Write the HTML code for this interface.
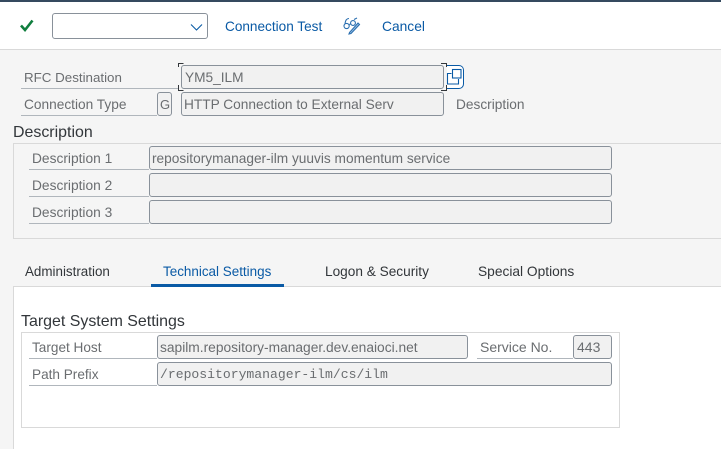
<!DOCTYPE html>
<html><head><meta charset="utf-8"><style>
html,body{margin:0;padding:0}
body{width:721px;height:449px;overflow:hidden;position:relative;background:#f5f5f5;font-family:"Liberation Sans",sans-serif;font-size:13.7px;color:#6a6d70}
div{position:absolute;box-sizing:border-box;white-space:nowrap}
.t{line-height:18px;height:18px}
.l{height:1px;background:#b0b6bc}
.f{background:#f1f1f1;border:1px solid #89919a;border-radius:3px;line-height:23px;padding-left:2px;height:24px;color:#6a6d70;font-size:13.7px}
.b{color:#0a5aa5}
.h{color:#32363a;font-size:15.95px}
.tab{color:#32363a;font-size:13.65px}
</style></head><body>
<div style="left:0;top:0;width:721px;height:2px;background:#354a5f"></div>
<div style="left:0;top:2px;width:721px;height:48px;background:#fff;border-bottom:1px solid #d9d9d9"></div>
<svg style="position:absolute;left:19px;top:18px" width="16" height="15" viewBox="0 0 16 15"><path d="M2 7.500L6 12L13.500 2.500" fill="none" stroke="#107e3e" stroke-width="2.600"/></svg>
<div style="left:52px;top:13px;width:156px;height:26px;background:#fff;border:1px solid #89919a;border-radius:3px"></div>
<svg style="position:absolute;left:190px;top:23px" width="14" height="9" viewBox="0 0 14 9"><path d="M1 1.500L6.500 7L12 1.500" fill="none" stroke="#0a5aa5" stroke-width="1.100"/></svg>
<div class="t b" style="left:225px;top:18px;font-size:13.6px">Connection Test</div>
<svg style="position:absolute;left:343px;top:17px" width="18" height="18" viewBox="0 0 18 18" fill="none" stroke="#2a6fb0" stroke-width="1.100"><circle cx="3.600" cy="9" r="2.600"/><circle cx="10" cy="6" r="2.400"/><path d="M2 6.500C2.500 3 4 1.500 6 1.500M6.200 7.500L7.600 7M11 2.500L14 1"/><path d="M6.500 15.500L6 17L8 16.500L16.500 7.500L15 6Z" fill="#9cc1e2"/></svg>
<div class="t b" style="left:382px;top:18px;font-size:13.8px">Cancel</div>

<div class="t" style="left:24px;top:69px;font-size:13.35px">RFC Destination</div>
<div class="l" style="left:21px;top:88px;width:158px"></div>
<div class="f" style="left:181px;top:65px;width:263px;padding-left:3px">YM5_ILM</div>
<div style="left:447px;top:65px;width:17px;height:24px;background:#fff;border:1px solid #0a5aa5;border-left:0;border-radius:0 5px 5px 0"></div>
<svg style="position:absolute;left:446px;top:66px" width="17" height="22" viewBox="0 0 17 22" fill="none" stroke="#0a5aa5" stroke-width="1.100"><rect x="6.500" y="3.500" width="8.500" height="8.500"/><path d="M5.500 7.500H1.500V18H12.500V13"/></svg>
<svg style="position:absolute;left:176px;top:61px" width="274" height="32" viewBox="0 0 274 32" fill="none" stroke="#32363a" stroke-width="1"><path d="M7.500 2.500H2.500V6M2.500 24V29.500H7.500M265 2.500H270.500V6M270.500 24V29.500H265"/></svg>

<div class="t" style="left:24px;top:96px">Connection Type</div>
<div class="l" style="left:21px;top:115px;width:136px"></div>
<div class="f" style="left:157px;top:92px;width:15px;font-size:13px;padding-left:2px">G</div>
<div class="f" style="left:181px;top:92px;width:263px">HTTP Connection to External Serv</div>
<div class="t" style="left:456px;top:96px">Description</div>

<div class="t h" style="left:13px;top:124px">Description</div>
<div style="left:13px;top:143px;width:708px;height:96px;border:1px solid #d9d9d9;border-right:0"></div>
<div class="t" style="left:32px;top:150px;font-size:13.75px">Description 1</div>
<div class="l" style="left:29px;top:169px;width:120px"></div>
<div class="f" style="left:149px;top:146px;width:463px">repositorymanager-ilm yuuvis momentum service</div>
<div class="t" style="left:32px;top:177px;font-size:13.75px">Description 2</div>
<div class="l" style="left:29px;top:196px;width:120px"></div>
<div class="f" style="left:149px;top:173px;width:463px"></div>
<div class="t" style="left:32px;top:204px;font-size:13.75px">Description 3</div>
<div class="l" style="left:29px;top:223px;width:120px"></div>
<div class="f" style="left:149px;top:200px;width:463px"></div>

<div style="left:13px;top:286px;width:708px;height:163px;background:#fff;border-top:1px solid #d9d9d9;border-left:1px solid #d9d9d9"></div>
<div class="t tab" style="left:25px;top:263px;font-size:13.4px">Administration</div>
<div class="t tab" style="left:163px;top:263px;color:#0a5aa5;font-size:13.45px">Technical Settings</div>
<div style="left:151px;top:284px;width:133px;height:3px;background:#0a5aa5"></div>
<div class="t tab" style="left:325px;top:263px">Logon &amp; Security</div>
<div class="t tab" style="left:478px;top:263px;font-size:13.75px">Special Options</div>

<div class="t h" style="left:21px;top:313px">Target System Settings</div>
<div style="left:21px;top:332px;width:599px;height:96px;border:1px solid #d9d9d9"></div>
<div class="t" style="left:32px;top:339px;font-size:13.6px">Target Host</div>
<div class="l" style="left:29px;top:358px;width:128px"></div>
<div class="f" style="left:157px;top:335px;width:311px;font-size:13.78px">sapilm.repository-manager.dev.enaioci.net</div>
<div class="t" style="left:480px;top:338px;font-size:14px">Service No.</div>
<div class="l" style="left:477px;top:358px;width:96px"></div>
<div class="f" style="left:573px;top:335px;width:39px;padding-left:3px;font-size:14px">443</div>
<div class="t" style="left:32px;top:366px;font-size:13.6px">Path Prefix</div>
<div class="l" style="left:29px;top:385px;width:128px"></div>
<div class="f" style="left:157px;top:362px;width:455px;font-family:'Liberation Mono',monospace;font-size:13.1px">/repositorymanager-ilm/cs/ilm</div>
</body></html>
